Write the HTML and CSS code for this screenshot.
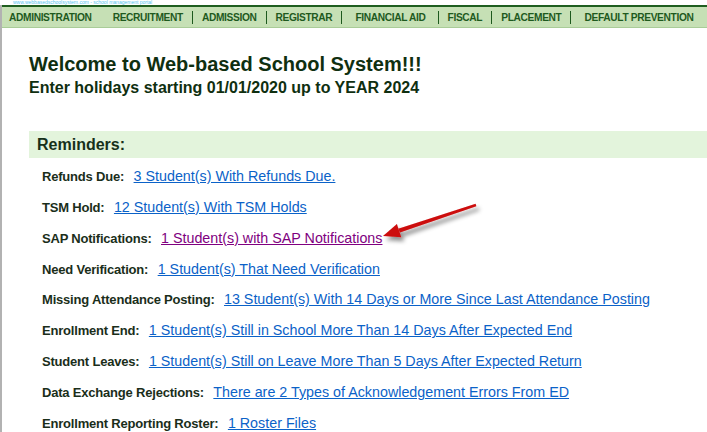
FILE: index.html
```html
<!DOCTYPE html>
<html lang="en">
<head>
    <meta charset="UTF-8">
    <title>Web-based School System</title>
    <link rel="stylesheet" href="styles.css">
</head>
<body>
    <div class="topline">www.webbasedschoolsystem.com - school management portal</div>
    <div class="page">
        <div class="nav">
            <div class="nav-item">ADMINISTRATION</div>
            <div class="nav-item wide">RECRUITMENT</div>
            <div class="nav-item sep">ADMISSION</div>
            <div class="nav-item sep">REGISTRAR</div>
            <div class="nav-item sep roomy">FINANCIAL AID</div>
            <div class="nav-item sep">FISCAL</div>
            <div class="nav-item sep">PLACEMENT</div>
            <div class="nav-item sep roomy">DEFAULT PREVENTION</div>
        </div>

        <div class="content">
            <h1>Welcome to Web-based School System!!!</h1>
            <h2>Enter holidays starting 01/01/2020 up to YEAR 2024</h2>

            <div class="reminders">
                <div class="reminders-title">Reminders:</div>
                <div class="reminder-row">
                    <span class="label">Refunds Due:</span>
                    <a href="#">3 Student(s) With Refunds Due.</a>
                </div>
                <div class="reminder-row">
                    <span class="label">TSM Hold:</span>
                    <a href="#">12 Student(s) With TSM Holds</a>
                </div>
                <div class="reminder-row">
                    <span class="label">SAP Notifications:</span>
                    <a href="#" class="visited">1 Student(s) with SAP Notifications</a>
                </div>
                <div class="reminder-row">
                    <span class="label">Need Verification:</span>
                    <a href="#">1 Student(s) That Need Verification</a>
                </div>
                <div class="reminder-row">
                    <span class="label">Missing Attendance Posting:</span>
                    <a href="#">13 Student(s) With 14 Days or More Since Last Attendance Posting</a>
                </div>
                <div class="reminder-row">
                    <span class="label">Enrollment End:</span>
                    <a href="#">1 Student(s) Still in School More Than 14 Days After Expected End</a>
                </div>
                <div class="reminder-row">
                    <span class="label">Student Leaves:</span>
                    <a href="#">1 Student(s) Still on Leave More Than 5 Days After Expected Return</a>
                </div>
                <div class="reminder-row">
                    <span class="label">Data Exchange Rejections:</span>
                    <a href="#">There are 2 Types of Acknowledgement Errors From ED</a>
                </div>
                <div class="reminder-row">
                    <span class="label">Enrollment Reporting Roster:</span>
                    <a href="#">1 Roster Files</a>
                </div>

                <!-- callout arrow pointing at the SAP link -->
                <svg class="arrow" width="120" height="60" viewBox="0 0 120 60">
                    <defs>
                        <filter id="shadow" x="-20%" y="-40%" width="140%" height="180%">
                            <feDropShadow dx="3" dy="4" stdDeviation="2" flood-color="#000" flood-opacity="0.45"/>
                        </filter>
                    </defs>
                    <g filter="url(#shadow)">
                        <polygon points="105.6,9.8 106.4,12.2 30,38.4 28.2,34.8" fill="#cc0a0a"/>
                        <polygon points="13,42 31.3,43.2 26.9,30" fill="#cc0a0a"/>
                    </g>
                </svg>
            </div>
        </div>
    </div>
</body>
</html>
```

FILE: styles.css
```css
* {
    margin: 0;
    padding: 0;
    box-sizing: border-box;
}

body {
    background-color: #fff;
    font-family: 'Liberation Sans', Arial, sans-serif;
    color: #163016;
}

.topline {
    height: 5px;
    overflow: hidden;
    padding-left: 13px;
    font-size: 5px;
    line-height: 5px;
    color: #56c4ee;
    white-space: nowrap;
}

.page {
    border-left: 2px solid #b2b2b2;
    min-height: 427px;
}

.nav {
    display: flex;
    align-items: center;
    height: 23px;
    background-color: #c6e0b5;
    border-top: 2px solid #1f5e1f;
    border-bottom: 1px solid #a9cc98;
    padding-left: 7px;
    overflow: hidden;
    white-space: nowrap;
}

.nav-item {
    flex-shrink: 0;
    font-size: 10.2px;
    font-weight: bold;
    letter-spacing: -0.35px;
    line-height: 13px;
    color: #1e5a1e;
    padding: 0 9px 0 0;
}

.nav-item.wide {
    padding-left: 12px;
}

.nav-item.sep {
    border-left: 1px solid #1e5a1e;
    padding-left: 9px;
}

.nav-item.roomy {
    padding-left: 13px;
    padding-right: 12px;
}

.content {
    padding: 24px 0 0 27px;
}

h1 {
    font-size: 20px;
    line-height: 24px;
    font-weight: bold;
    color: #0f2f10;
}

h2 {
    font-size: 16px;
    line-height: 24px;
    font-weight: bold;
    color: #0f2f10;
}

.reminders {
    position: relative;
    margin-top: 31px;
}

.reminders-title {
    height: 27px;
    line-height: 27px;
    padding-left: 8px;
    background-color: #e3f4dc;
    font-size: 16px;
    font-weight: bold;
    color: #16301a;
    margin-bottom: 2px;
}

.reminder-row {
    height: 30.85px;
    line-height: 31px;
    padding-left: 13px;
    white-space: nowrap;
}

.label {
    font-size: 13px;
    font-weight: bold;
    letter-spacing: -0.2px;
    color: #1a2e1a;
    margin-right: 5px;
}

.reminder-row a {
    font-size: 14.3px;
    color: #0b62c8;
    text-decoration: underline;
}

.reminder-row a.visited {
    color: #800080;
}

.arrow {
    position: absolute;
    left: 341px;
    top: 63px;
}
```
